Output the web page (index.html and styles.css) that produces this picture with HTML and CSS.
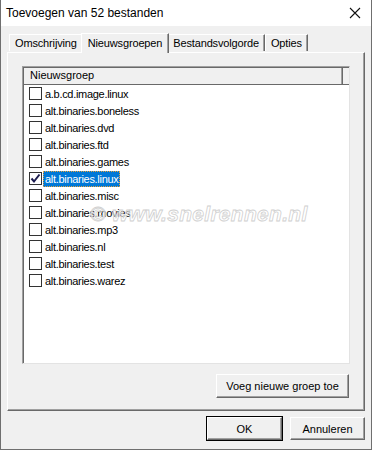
FILE: index.html
```html
<!DOCTYPE html>
<html lang="nl">
<head>
<meta charset="UTF-8">
<title>Toevoegen van 52 bestanden</title>
<link rel="stylesheet" href="styles.css">
</head>
<body>
<div class="window">
    <div class="titlebar">
        <span class="title">Toevoegen van 52 bestanden</span>
        <svg class="close" width="12" height="12" viewBox="0 0 12 12">
            <path d="M1 1 L11 11 M11 1 L1 11" stroke="#111" stroke-width="1.1" fill="none"/>
        </svg>
    </div>
    <div class="content">
        <div class="tabs">
            <div class="tab">Omschrijving</div>
            <div class="tab active">Nieuwsgroepen</div>
            <div class="tab">Bestandsvolgorde</div>
            <div class="tab">Opties</div>
        </div>
        <div class="panel">
            <div class="listbox">
                <div class="list-header">
                    <span class="col">Nieuwsgroep</span>
                    <span class="col-rest"></span>
                </div>
                <div class="rows">
                    <div class="row"><span class="check"></span><span class="label">a.b.cd.image.linux</span></div>
                    <div class="row"><span class="check"></span><span class="label">alt.binaries.boneless</span></div>
                    <div class="row"><span class="check"></span><span class="label">alt.binaries.dvd</span></div>
                    <div class="row"><span class="check"></span><span class="label">alt.binaries.ftd</span></div>
                    <div class="row"><span class="check"></span><span class="label">alt.binaries.games</span></div>
                    <div class="row"><span class="check checked"><svg width="11" height="11" viewBox="0 0 11 11"><path d="M1.5 5.5 L4 8.5 L9.5 1.5" stroke="#1b1b4f" stroke-width="2" fill="none"/></svg></span><span class="label selected">alt.binaries.linux</span></div>
                    <div class="row"><span class="check"></span><span class="label">alt.binaries.misc</span></div>
                    <div class="row"><span class="check"></span><span class="label">alt.binaries.movies</span></div>
                    <div class="row"><span class="check"></span><span class="label">alt.binaries.mp3</span></div>
                    <div class="row"><span class="check"></span><span class="label">alt.binaries.nl</span></div>
                    <div class="row"><span class="check"></span><span class="label">alt.binaries.test</span></div>
                    <div class="row"><span class="check"></span><span class="label">alt.binaries.warez</span></div>
                </div>
                <div class="watermark">&copy; www.snelrennen.nl</div>
            </div>
            <div class="panel-actions">
                <button class="btn wide">Voeg nieuwe groep toe</button>
            </div>
        </div>
        <div class="footer">
            <button class="btn default">OK</button>
            <button class="btn">Annuleren</button>
        </div>
    </div>
</div>
</body>
</html>
```
FILE: styles.css
```css
body {
    margin: 0;
    padding: 0;
    background-color: #f0f0f0;
    font-family: "Liberation Sans", Arial, sans-serif;
    font-size: 11px;
    color: #000;
}
.window {
    width: 372px;
    height: 450px;
    box-sizing: border-box;
    border: 1px solid #6f6f6f;
    border-top: none;
    background-color: #f0f0f0;
    display: flex;
    flex-direction: column;
}
.titlebar {
    height: 26px;
    background-color: #fff;
    display: flex;
    align-items: center;
    justify-content: space-between;
    padding: 0 10px 0 5px;
}
.title {
    font-size: 12px;
    font-family: "Liberation Sans", Arial, sans-serif;
}
.content {
    flex: 1;
    display: flex;
    flex-direction: column;
    padding: 0 6px;
}
.tabs {
    display: flex;
    align-items: flex-end;
    height: 26px;
    padding-left: 2px;
    position: relative;
    z-index: 1;
}
.tab {
    height: 16px;
    line-height: 16px;
    padding: 0 5px;
    letter-spacing: -0.15px;
    border-top: 1px solid #fff;
    border-left: 1px solid #fff;
    border-right: 1px solid #696969;
    box-shadow: inset -1px 0 0 #a0a0a0;
    margin-bottom: 1px;
}
.tab.active {
    height: 19px;
    line-height: 18px;
    padding: 0 6px;
    margin: 0 -2px -1px -2px;
    background-color: #f0f0f0;
    position: relative;
    z-index: 2;
}
.panel {
    height: 359px;
    box-sizing: border-box;
    border-top: 1px solid #fff;
    border-left: 1px solid #fff;
    border-right: 1px solid #696969;
    border-bottom: 1px solid #696969;
    box-shadow: inset -1px -1px 0 #a0a0a0;
    padding: 13px 14px 0 14px;
    display: flex;
    flex-direction: column;
}
.listbox {
    height: 298px;
    box-sizing: border-box;
    background-color: #fff;
    border-top: 1px solid #a0a0a0;
    border-left: 1px solid #a0a0a0;
    border-right: 1px solid #e3e3e3;
    border-bottom: 1px solid #e3e3e3;
    box-shadow: inset 1px 1px 0 #696969;
    position: relative;
}
.list-header {
    display: flex;
    height: 16px;
    margin: 1px 0 0 1px;
    background-color: #f0f0f0;
    border-bottom: 1px solid #696969;
    line-height: 15px;
}
.col {
    width: 312px;
    padding-left: 6px;
    border-right: 1px solid #696969;
    box-shadow: inset -1px 0 0 #a0a0a0;
}
.col-rest {
    flex: 1;
}
.row {
    height: 17px;
    display: flex;
    align-items: center;
    padding-left: 6px;
}
.check {
    width: 11px;
    height: 11px;
    border: 1px solid #333;
    background-color: #fff;
    margin-right: 1px;
    display: flex;
}
.label {
    padding: 1px 1px;
    letter-spacing: -0.3px;
    border: 1px dotted transparent;
}
.label.selected {
    background-color: #0078d7;
    color: #fff;
    border-color: #e8a23c;
}
.watermark {
    position: absolute;
    left: 67px;
    top: 135px;
    font-size: 21px;
    font-weight: bold;
    font-style: italic;
    letter-spacing: 0.3px;
    color: rgba(255, 255, 255, 0.5);
    -webkit-text-stroke: 0.8px #cfcfcf;
    white-space: nowrap;
}
.panel-actions {
    display: flex;
    justify-content: flex-end;
    padding-top: 10px;
    padding-right: 1px;
}
.btn {
    font-family: "Liberation Sans", Arial, sans-serif;
    font-size: 11px;
    color: #000;
    height: 24px;
    background-color: #f0f0f0;
    border-top: 1px solid #fff;
    border-left: 1px solid #fff;
    border-right: 1px solid #696969;
    border-bottom: 1px solid #696969;
    box-shadow: inset -1px -1px 0 #a0a0a0;
    padding: 0;
}
.btn.wide {
    width: 133px;
}
.footer {
    flex: 1;
    display: flex;
    justify-content: flex-end;
    align-items: flex-start;
    gap: 8px;
    padding-top: 6px;
}
.footer .btn {
    width: 75px;
    height: 23px;
}
.btn.default {
    outline: 1px solid #000;
    outline-offset: 0;
}
```
